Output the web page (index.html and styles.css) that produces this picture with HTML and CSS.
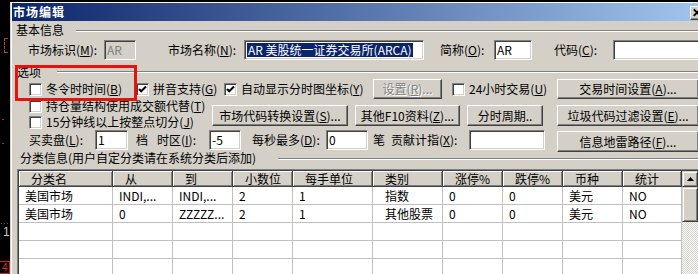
FILE: index.html
```html
<!DOCTYPE html>
<html lang="zh-CN">
<head>
<meta charset="utf-8">
<title>市场编辑</title>
<link rel="stylesheet" href="styles.css">
</head>
<body>
<div class="chart">
  <div class="bracket"></div>
  <div class="dot d1"></div>
  <div class="dot d2"></div>
  <div class="dots d3"></div>
  <div class="num">1</div>
  <div class="box4">4</div>
</div>
<div class="dialog">
 <div class="frame">
  <div class="title">
    <span class="title-text">市场编辑</span>
    <span class="close"><svg width="16" height="14" viewBox="0 0 16 14"><path d="M4 3 L11 10 M11 3 L4 10" stroke="#000" stroke-width="2" fill="none"/></svg></span>
  </div>

  <div class="gh gh1"><span class="gl gl1">基本信息</span><span class="etch"></span></div>
  <div class="r1">
    <span class="lab w76">市场标识(<u>M</u>):</span>
    <span class="fld dis w32">AR</span>
    <span class="lab ml32 w76">市场名称(<u>N</u>):</span>
    <span class="fld w180"><span class="sel">AR 美股统一证券交易所(ARCA)</span></span>
    <span class="lab ml16 w54">简称(<u>O</u>):</span>
    <span class="fld w38">AR</span>
    <span class="lab ml22 w59">代码(<u>C</u>):</span>
    <span class="fld w120"></span>
  </div>

  <div class="gh gh2"><span class="gl gl2">选项</span><span class="etch"></span></div>
  <div class="ra">
    <span class="ck w107"><span class="cb"></span><span class="cl">冬令时时间(<u>B</u>)</span></span>
    <span class="ck w88"><span class="cb"><svg width="9" height="9" viewBox="0 0 9 9"><polyline points="1,4 3.2,6.3 8,1.5" stroke="#000" stroke-width="2" fill="none"/></svg></span><span class="cl">拼音支持(<u>G</u>)</span></span>
    <span class="ck w149"><span class="cb"><svg width="9" height="9" viewBox="0 0 9 9"><polyline points="1,4 3.2,6.3 8,1.5" stroke="#000" stroke-width="2" fill="none"/></svg></span><span class="cl">自动显示分时图坐标(<u>Y</u>)</span></span>
    <span class="btn off w69">设置(<u>R</u>)...</span>
    <span class="ck ml10 w105"><span class="cb"></span><span class="cl">24小时交易(<u>U</u>)</span></span>
    <span class="btn w142">交易时间设置(<u>A</u>)...</span>
  </div>
  <div class="bc">
    <div class="bcl">
      <div class="rowck"><span class="cb"></span><span class="cl">持仓量结构使用成交额代替(<u>T</u>)</span></div>
      <div class="rowck"><span class="cb"></span><span class="cl">15分钟线以上按整点切分(<u>J</u>)</span></div>
    </div>
    <div class="bcr">
      <span class="btn h21 w136">市场代码转换设置(<u>S</u>)...</span>
      <span class="btn h21 ml7 w105">其他F10资料(<u>Z</u>)...</span>
      <span class="btn h21 ml7 w76">分时周期..</span>
      <span class="btn h21 ml14 w142">垃圾代码过滤设置(<u>E</u>)...</span>
    </div>
  </div>
  <div class="rd">
    <span class="lab w66">买卖盘(<u>L</u>):</span>
    <span class="fld w33">1</span>
    <span class="lab ml8 w21">档</span>
    <span class="lab w52">时区(<u>I</u>):</span>
    <span class="fld w32">-5</span>
    <span class="lab ml11 w74">每秒最多(<u>D</u>):</span>
    <span class="fld w42">0</span>
    <span class="lab ml5 w18">笔</span>
    <span class="lab w78">贡献计指(<u>X</u>):</span>
    <span class="fld w76"></span>
    <span class="btn h21 mt1 ml12 w142">信息地雷路径(<u>F</u>)...</span>
  </div>

  <div class="gh gh3"><span class="gl gl3">分类信息(用户自定分类请在系统分类后添加)</span><span class="etch"></span></div>

  <div class="tbl">
    <div class="grid">
      <div class="th">分类名</div><div class="th">从</div><div class="th">到</div><div class="th">小数位</div><div class="th">每手单位</div><div class="th">类别</div><div class="th">涨停%</div><div class="th">跌停%</div><div class="th">币种</div><div class="th">统计</div>

      <div class="td">美国市场</div><div class="td">INDI,...</div><div class="td">INDI,...</div><div class="td">2</div><div class="td">1</div><div class="td wide">指数</div><div class="td">0</div><div class="td">0</div><div class="td">美元</div><div class="td">NO</div>

      <div class="td">美国市场</div><div class="td">0</div><div class="td">ZZZZZ...</div><div class="td">2</div><div class="td">1</div><div class="td wide">其他股票</div><div class="td">0</div><div class="td">0</div><div class="td">美元</div><div class="td">NO</div>

      <div class="td"></div><div class="td"></div><div class="td"></div><div class="td"></div><div class="td"></div><div class="td"></div><div class="td"></div><div class="td"></div><div class="td"></div><div class="td"></div>
      <div class="td"></div><div class="td"></div><div class="td"></div><div class="td"></div><div class="td"></div><div class="td"></div><div class="td"></div><div class="td"></div><div class="td"></div><div class="td"></div>
      <div class="td"></div><div class="td"></div><div class="td"></div><div class="td"></div><div class="td"></div><div class="td"></div><div class="td"></div><div class="td"></div><div class="td"></div><div class="td"></div>
    </div>
    <div class="sb">
      <div class="sb-btn"><svg width="7" height="4" viewBox="0 0 7 4"><polygon points="3.5,0 7,4 0,4" fill="#000"/></svg></div>
      <div class="sb-thumb"></div>
      <div class="sb-track"></div>
    </div>
  </div>

  <div class="annot"></div>
 </div>
</div>
</body>
</html>
```

FILE: styles.css
```css
* { box-sizing: border-box; }
html, body { margin: 0; padding: 0; }
body {
  width: 698px; height: 274px; overflow: hidden;
  background: #000;
  display: flex; align-items: flex-start;
  font-family: "Noto Sans CJK SC", "Noto Sans", sans-serif;
  font-size: 12px; line-height: 1; color: #000;
}
u { text-decoration: underline; text-underline-offset: 1px; }

/* chart behind the dialog */
.chart { position: relative; flex: none; width: 10px; height: 274px; }
.bracket { position: absolute; left: 4px; top: 38px; width: 4px; height: 15px; border: 1px dashed #b83a3a; border-right: none; }
.dot { position: absolute; left: 2px; width: 2px; height: 1px; background: #a03030; }
.d1 { top: 119px; }
.d2 { top: 143px; }
.dots { position: absolute; left: 1px; top: 223px; width: 9px; height: 1px; background: repeating-linear-gradient(to right, #a03030 0 1px, transparent 1px 3px); }
.num { position: absolute; left: 3px; top: 226px; color: #c8c8c8; font-family: "Liberation Sans", sans-serif; font-size: 12px; }
.box4 { position: absolute; left: -1px; top: 261px; width: 11px; height: 13px; border: 1px solid #d02020; color: #e03030; font-family: "Liberation Sans", sans-serif; font-size: 10px; line-height: 11px; padding-left: 2px; }

/* dialog */
.dialog { flex: none; width: 712px; height: 274px; margin-top: 2px; border-left: 1px solid #d4d0c8; background: #d4d0c8; }
.frame { position: relative; height: 100%; border-top: 1px solid #fff; border-left: 1px solid #fff; overflow: hidden; }
.title { display: flex; align-items: flex-start; height: 18px; background: linear-gradient(to right, #0a246a 0%, #a6caf0 100%); }
.title-text { color: #fff; font-weight: bold; font-size: 12px; letter-spacing: 1px; padding-left: 1px; line-height: 18px; }
.close { margin-left: auto; margin-right: 16px; margin-top: 3px; width: 16px; height: 14px; background: #d4d0c8; border: 1px solid; border-color: #fff #404040 #404040 #fff; box-shadow: inset -1px -1px #808080; display: flex; }
.close svg { margin: -1px 0 0 -1px; }

/* group headers */
.gh { display: flex; align-items: center; }
.gl { flex: none; }
.etch { flex: 1; height: 2px; border-top: 1px solid #808080; border-bottom: 1px solid #fff; }
.gh1 { height: 16px; margin-top: 1px; padding-left: 4px; }
.gh1 .etch { margin-top: 2px; }
.gl1 { width: 60px; }
.gh2 { height: 14px; margin-top: 5px; padding-left: 5px; }
.gl2 { width: 40px; }
.gh3 { height: 14px; padding-left: 8px; }
.gh3 .etch { margin-top: 2px; }
.gl3 { width: 258px; }

/* rows */
.r1 { display: flex; align-items: center; height: 20px; margin-top: 2px; padding-left: 16px; }
.ra { display: flex; align-items: center; height: 20px; padding-left: 17px; }
.bc { display: flex; height: 31px; }
.bcl { flex: none; width: 200px; padding-left: 17px; margin-top: -1px; }
.rowck { display: flex; align-items: center; height: 16px; }
.bcr { display: flex; align-items: flex-start; padding-top: 6px; }
.rd { display: flex; align-items: flex-start; height: 21px; padding-left: 17px; }

.lab { flex: none; height: 20px; line-height: 20px; white-space: nowrap; }
.fld {
  flex: none; height: 20px; background: #fff;
  border: 1px solid; border-color: #808080 #fff #fff #808080;
  box-shadow: inset 1px 1px #404040, inset -1px -1px #d4d0c8;
  padding-left: 2px; line-height: 18px; white-space: nowrap; overflow: hidden;
}
.fld.dis { background: #d4d0c8; color: #808080; }
.sel { background: #0a246a; color: #fff; display: inline-block; line-height: 14px; padding: 0 1px; margin-top: 2px; vertical-align: top; }

.ck { flex: none; display: flex; align-items: center; white-space: nowrap; }
.cb {
  flex: none; width: 13px; height: 13px; background: #fff;
  border: 1px solid; border-color: #808080 #fff #fff #808080;
  box-shadow: inset 1px 1px #404040, inset -1px -1px #d4d0c8;
  display: flex; align-items: center; justify-content: center;
}
.cl { margin-left: 4px; white-space: nowrap; line-height: 16px; }

.btn {
  flex: none; height: 20px; display: flex; align-items: center; justify-content: center;
  background: #d4d0c8; border: 1px solid; border-color: #fff #404040 #404040 #fff;
  box-shadow: inset -1px -1px #808080; white-space: nowrap;
}
.btn.off { color: #808080; text-shadow: 1px 1px #fff; }
.h21 { height: 21px; }
.mt1 { margin-top: 1px; }

/* widths / spacing */
.w18 { width: 18px; } .w21 { width: 21px; } .w32 { width: 32px; } .w33 { width: 33px; }
.w38 { width: 38px; } .w42 { width: 42px; } .w52 { width: 52px; } .w54 { width: 54px; }
.w59 { width: 59px; } .w66 { width: 66px; } .w69 { width: 69px; } .w74 { width: 74px; }
.w76 { width: 76px; } .w78 { width: 78px; } .w88 { width: 88px; } .w105 { width: 105px; }
.w107 { width: 107px; } .w120 { width: 120px; } .w136 { width: 136px; } .w142 { width: 142px; }
.w149 { width: 149px; } .w180 { width: 180px; }
.ml5 { margin-left: 5px; } .ml7 { margin-left: 7px; } .ml8 { margin-left: 8px; } .ml10 { margin-left: 10px; }
.ml11 { margin-left: 11px; } .ml12 { margin-left: 12px; } .ml14 { margin-left: 14px; } .ml16 { margin-left: 16px; }
.ml22 { margin-left: 22px; } .ml32 { margin-left: 32px; }

/* table */
.tbl {
  display: flex; width: 700px; margin: 4px 0 0 5px;
  border-top: 1px solid #808080; border-left: 1px solid #808080;
  padding: 1px 0 0 1px; background: #fff; box-shadow: inset 1px 1px #404040;
}
.grid {
  flex: none; display: grid;
  grid-template-columns: 94px 60px 60px 60px 80px 70px 60px 60px 60px 59px;
  grid-template-rows: 16px repeat(5, 18px);
}
.th {
  background: #d4d0c8; border-right: 1px solid #404040; border-bottom: 1px solid #404040;
  box-shadow: inset 1px 1px #fff, inset -1px -1px #808080;
  padding-left: 12px; line-height: 15px; white-space: nowrap;
}
.td { border-right: 1px solid #c0c0c0; border-bottom: 1px solid #c0c0c0; padding-left: 6px; line-height: 17px; white-space: nowrap; overflow: hidden; }
.td.wide { padding-left: 12px; }
.sb { flex: none; width: 16px; display: flex; flex-direction: column; height: 106px; }
.sb-btn, .sb-thumb {
  background: #d4d0c8; border: 1px solid; border-color: #d4d0c8 #404040 #404040 #d4d0c8;
  box-shadow: inset 1px 1px #fff, inset -1px -1px #808080;
}
.sb-btn { height: 16px; display: flex; align-items: center; justify-content: center; }
.sb-thumb { height: 35px; }
.sb-track { flex: 1; background: repeating-conic-gradient(#fff 0 25%, #d4d0c8 0 50%) 0 0 / 2px 2px; }

/* red annotation rectangle drawn over the dialog */
.annot { position: absolute; left: 3px; top: 62px; width: 122px; height: 36px; border: 3px solid #e8120c; }
```
